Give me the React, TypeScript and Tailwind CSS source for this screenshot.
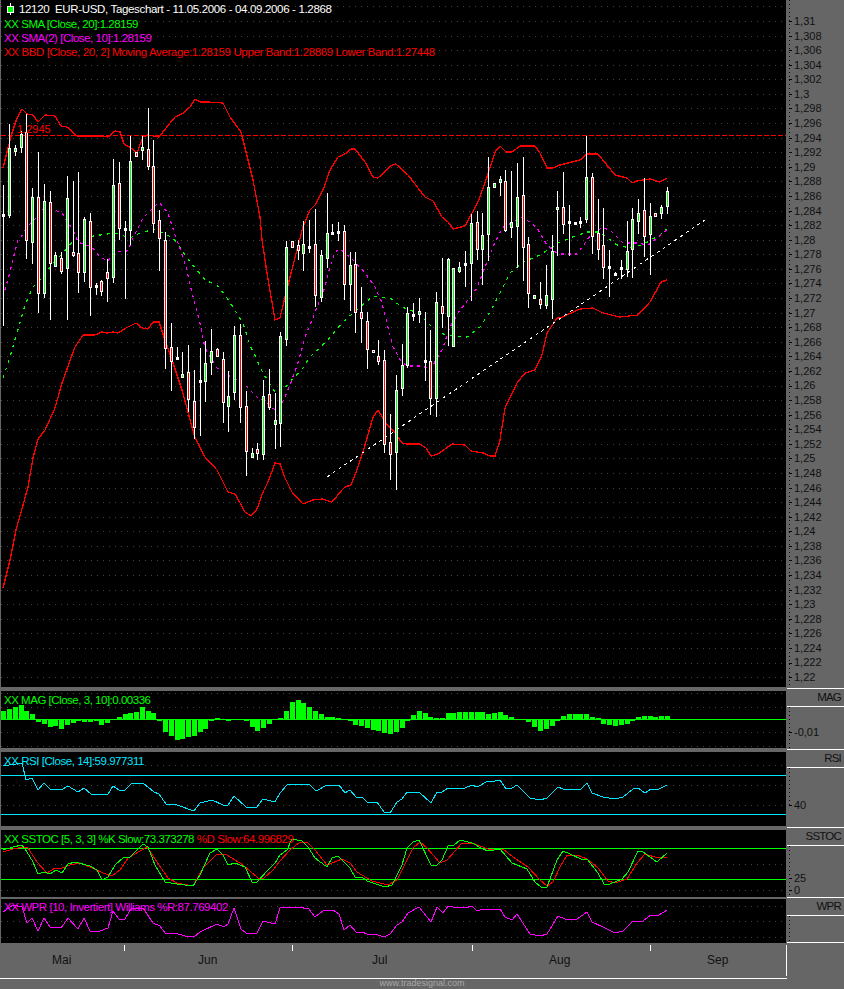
import React from 'react';

type Kind = 'g' | 'r' | 'w';
type Candle = [number, number, number, number, Kind];

// wick top, wick bottom, body top, body bottom, body colour (page pixels)
const candles: Candle[] = [
  [185, 326, 214, 216, 'w'], [124, 218, 148, 215, 'g'], [145, 156, 148, 151, 'g'], [131, 153, 134, 147, 'g'],
  [114, 259, 132, 240, 'r'], [188, 264, 197, 242, 'g'], [152, 313, 197, 293, 'r'], [184, 298, 201, 293, 'g'],
  [191, 320, 202, 263, 'r'], [252, 267, 255, 266, 'g'], [252, 274, 258, 271, 'r'], [176, 320, 198, 268, 'g'],
  [181, 257, 252, 255, 'r'], [172, 293, 253, 272, 'r'], [217, 282, 219, 272, 'g'], [213, 316, 221, 287, 'r'],
  [283, 295, 285, 287, 'w'], [280, 296, 281, 291, 'r'], [259, 302, 272, 278, 'r'], [159, 283, 185, 277, 'g'],
  [162, 240, 183, 228, 'r'], [221, 299, 228, 230, 'w'], [136, 245, 161, 230, 'g'], [152, 156, 152, 156, 'r'],
  [136, 160, 147, 150, 'g'], [108, 170, 149, 166, 'r'], [140, 233, 166, 223, 'r'], [210, 271, 220, 238, 'r'],
  [232, 369, 240, 348, 'r'], [323, 391, 347, 361, 'r'], [347, 358, 357, 358, 'w'], [352, 378, 374, 377, 'g'],
  [345, 412, 372, 399, 'r'], [370, 439, 401, 427, 'r'], [348, 436, 380, 382, 'w'], [341, 402, 363, 381, 'g'],
  [329, 375, 351, 362, 'g'], [348, 357, 349, 356, 'r'], [352, 423, 359, 402, 'r'], [371, 432, 396, 406, 'g'],
  [326, 400, 335, 392, 'g'], [324, 423, 335, 407, 'r'], [391, 476, 406, 451, 'r'], [448, 457, 453, 457, 'g'],
  [443, 460, 449, 453, 'r'], [380, 460, 396, 454, 'g'], [369, 410, 394, 407, 'r'], [393, 449, 420, 424, 'g'],
  [332, 447, 336, 423, 'g'], [241, 346, 247, 339, 'g'], [241, 248, 241, 247, 'r'], [240, 260, 245, 250, 'r'],
  [221, 271, 244, 253, 'g'], [220, 253, 246, 248, 'w'], [209, 307, 244, 295, 'r'], [250, 302, 255, 297, 'g'],
  [193, 268, 233, 258, 'g'], [224, 234, 232, 234, 'w'], [222, 241, 231, 233, 'w'], [225, 300, 231, 284, 'r'],
  [252, 311, 265, 284, 'g'], [252, 333, 264, 312, 'r'], [287, 343, 312, 318, 'r'], [312, 369, 321, 349, 'r'],
  [350, 352, 350, 352, 'r'], [340, 365, 356, 361, 'r'], [350, 453, 360, 444, 'r'], [414, 480, 442, 454, 'r'],
  [375, 490, 390, 452, 'g'], [344, 396, 365, 388, 'g'], [307, 368, 313, 365, 'g'], [303, 321, 314, 316, 'w'],
  [298, 323, 311, 314, 'g'], [312, 381, 360, 362, 'w'], [330, 415, 361, 398, 'r'], [292, 417, 302, 398, 'g'],
  [258, 328, 306, 313, 'r'], [258, 346, 259, 316, 'g'], [268, 346, 268, 346, 'g'], [262, 273, 267, 271, 'g'],
  [251, 287, 263, 265, 'w'], [214, 301, 223, 263, 'g'], [211, 260, 222, 249, 'r'], [213, 285, 235, 249, 'g'],
  [157, 261, 187, 234, 'g'], [183, 187, 183, 187, 'g'], [176, 196, 179, 182, 'g'], [170, 232, 181, 230, 'r'],
  [171, 238, 222, 227, 'g'], [163, 268, 197, 226, 'g'], [157, 281, 195, 247, 'r'], [237, 308, 244, 293, 'r'],
  [295, 298, 295, 298, 'g'], [282, 309, 299, 304, 'r'], [265, 309, 295, 305, 'g'], [235, 319, 251, 299, 'g'],
  [191, 256, 207, 209, 'g'], [172, 234, 207, 224, 'r'], [205, 256, 221, 223, 'w'], [222, 223, 222, 223, 'w'],
  [217, 228, 221, 222, 'w'], [136, 223, 177, 219, 'g'], [173, 254, 177, 236, 'r'], [199, 260, 233, 249, 'r'],
  [208, 279, 245, 267, 'r'], [250, 297, 266, 268, 'w'], [272, 276, 273, 275, 'w'], [260, 279, 267, 269, 'w'],
  [221, 277, 251, 269, 'g'], [208, 278, 219, 249, 'g'], [199, 234, 213, 221, 'g'], [178, 257, 210, 236, 'r'],
  [203, 275, 216, 234, 'g'], [213, 216, 213, 216, 'r'], [205, 219, 207, 213, 'g'], [187, 214, 191, 206, 'g'],
];

const magBars = [
  9, 11, 13, 15, 9, 6, -2, -4, -7, -6, -9, -5, -3, -1, -2, -2, -1, -5, -3, 1, 3, 6, 7, 8, 13, 9, 7, -1, -12, -16,
  -20, -19, -17, -16, -12, -9, -1, 2, 0, -1, 0, 0, -1, -7, -11, -8, -4, 0, 2, 9, 18, 20, 17, 13, 9, 6, 3, 3, 2, 0,
  -1, -5, -6, -8, -10, -11, -13, -14, -12, -8, -1, 5, 9, 7, 3, 2, 2, 7, 7, 8, 8, 8, 8, 8, 6, 7, 8, 5, 3, 1, 0, -2,
  -7, -11, -9, -6, -1, 4, 6, 6, 6, 6, 3, 2, -4, -5, -6, -5, -4, -1, 3, 4, 4, 3, 4, 4,
];

const upperBand =
  '3,168 7,152 12,133 17,118 22,109 27,114 33,115 38,122 45,115 55,116 61,126 67,127 77,136 100,136 108,137 115,131 120,132 124,144 131,148 137,153 143,137 148,135 159,137 170,123 175,117 182,114 190,107 195,99 200,102 208,102 223,103 230,117 241,132 248,160 253,180 260,217 262,240 267,273 275,320 280,318 285,297 290,277 297,250 303,227 310,210 315,205 323,190 330,170 338,157 345,154 351,149 355,149 365,162 373,177 378,178 392,165 396,164 408,175 425,197 433,201 442,217 448,222 453,229 465,226 472,213 478,202 487,177 495,152 500,146 506,152 512,152 520,146 535,146 540,153 547,168 553,168 560,165 580,160 587,154 598,154 615,175 627,178 632,183 637,181 650,179 660,182 667,178';
const lowerBand =
  '3,588 10,560 16,530 23,505 28,487 33,458 38,439 45,430 55,408 62,383 72,355 75,347 83,335 95,335 102,332 107,333 113,332 118,333 126,328 136,323 142,328 148,329 153,322 159,322 165,340 172,360 182,390 195,438 205,457 217,470 228,492 235,494 245,512 251,516 257,509 263,492 268,482 275,463 280,464 285,478 292,492 303,504 313,500 322,499 332,502 342,490 345,487 351,485 357,470 365,445 373,417 378,410 386,423 395,433 402,443 407,444 420,444 426,448 431,456 438,454 452,444 465,445 471,451 483,453 490,456 495,456 500,440 505,408 517,383 525,373 535,370 542,355 547,333 557,318 560,318 580,309 593,308 603,313 620,317 638,315 650,302 661,282 667,280';
const smaMagenta =
  '3,297 10,272 18,240 21,237 27,227 37,217 43,209 52,209 62,213 73,230 78,242 92,247 100,257 108,261 115,252 127,251 131,244 133,238 143,218 159,202 168,213 175,235 178,243 185,263 192,293 200,323 205,348 217,368 233,378 245,385 257,397 267,403 275,410 280,408 290,385 298,363 305,337 312,320 317,307 325,287 330,267 335,252 340,249 353,260 365,273 375,287 382,303 387,323 393,347 402,363 410,366 423,366 430,370 442,350 450,327 458,313 477,288 485,267 493,247 502,228 513,222 523,217 537,228 547,245 558,254 577,254 585,243 592,233 602,228 610,230 623,243 637,243 648,245 657,238 667,230';
const smaGreen =
  '3,378 10,357 17,333 25,305 33,287 43,277 53,263 63,253 72,242 80,238 100,235 115,233 130,238 140,233 155,229 173,238 177,243 190,262 205,280 217,285 227,298 243,323 250,345 263,373 275,392 280,393 290,382 303,368 310,357 328,340 343,322 360,307 373,296 390,298 402,307 418,313 433,328 445,335 467,337 480,327 490,312 500,293 510,273 523,262 540,255 558,243 570,238 587,232 600,232 617,245 630,248 642,245 660,235 667,229';
const rsiLine =
  '3,766 22,763 26,780 32,778 38,790 44,783 50,789 61,790 68,786 78,792 84,788 91,794 108,794 113,786 119,790 125,790 131,784 143,783 154,792 159,794 166,804 177,805 194,811 200,803 212,800 223,805 228,805 234,796 246,807 257,807 263,799 275,802 280,793 287,785 309,784 316,791 327,785 339,785 345,793 350,790 356,797 362,797 367,802 377,802 384,812 390,813 397,802 402,799 407,792 419,792 431,803 437,792 442,792 448,788 465,788 472,785 477,787 488,781 495,781 500,780 506,789 512,788 517,785 530,798 540,800 547,798 558,787 563,789 581,789 587,783 592,793 603,797 615,799 623,797 633,789 638,788 645,793 651,789 659,789 667,785';
const stochK =
  '3,850 13,847 22,845 27,852 33,862 38,874 44,872 50,874 56,870 62,873 68,864 75,862 90,866 97,870 102,880 108,877 115,865 123,858 130,857 143,844 148,847 155,865 165,882 177,884 193,886 200,875 210,853 217,849 223,855 228,865 235,863 245,867 252,882 257,882 268,870 275,863 280,855 287,850 292,839 302,841 308,847 315,858 327,867 332,858 338,856 350,868 355,877 362,877 367,881 385,887 392,885 402,865 407,848 413,842 419,840 431,865 437,865 442,860 448,846 454,845 460,840 472,843 483,849 488,851 500,849 512,863 527,869 535,882 541,887 547,887 557,860 563,851 570,854 581,859 587,859 598,873 604,884 610,884 622,879 628,872 638,851 643,852 657,862 667,853';
const stochD =
  '3,852 13,849 23,847 28,848 37,862 47,873 55,868 62,868 70,865 80,863 92,868 103,873 112,876 120,870 128,858 147,847 157,862 168,878 177,883 193,886 203,868 217,854 227,855 243,865 258,878 263,879 273,870 280,861 290,850 300,842 308,843 315,850 327,865 342,859 350,863 357,872 372,881 388,885 397,880 407,860 413,848 420,842 427,848 440,863 447,860 462,843 472,843 488,849 503,849 513,857 528,867 540,880 547,886 553,882 560,867 567,855 577,855 587,859 598,868 608,881 615,883 627,879 637,863 645,854 658,858 667,857';
const wprLine =
  '3,912 13,905 22,907 27,923 32,918 38,931 44,918 50,927 61,928 68,918 78,929 84,918 90,931 100,931 108,928 113,911 119,919 125,919 131,909 143,908 153,923 160,926 166,934 175,933 185,936 194,937 200,932 217,924 224,927 228,924 234,908 241,929 246,933 257,933 263,921 275,924 280,908 285,907 298,907 309,909 315,917 323,911 333,910 339,914 344,930 350,925 356,932 362,932 367,934 378,935 384,937 390,934 397,925 402,922 408,913 419,907 431,922 437,907 443,913 448,906 453,907 465,908 472,906 477,911 483,909 500,909 505,917 512,920 517,914 530,934 540,936 547,934 558,916 565,919 577,919 587,912 592,922 603,927 615,933 623,931 633,921 643,921 651,915 659,915 667,910';

const candleX = (i: number) => Math.round(3.4 + 5.77 * i);
const axisY = (n: number) => 21 + n * 14.58;
const axisLabels = Array.from({ length: 46 }, (_, n) =>
  String(parseFloat((1.31 - n * 0.002).toFixed(3))).replace('.', ','),
);
const mainGrid = Array.from({ length: 47 }, (_, n) => Math.round(axisY(n - 1)));

const fill: Record<Kind, string> = { g: '#00ff00', r: '#ff0000', w: '#ffffff' };

function Grid({ ys }: { ys: number[] }) {
  return (
    <>
      {ys.map((y) => (
        <line key={y} x1={1} x2={786} y1={y + 0.5} y2={y + 0.5} stroke="#444" strokeDasharray="1 5" />
      ))}
    </>
  );
}

function Rule({ y, color }: { y: number; color: string }) {
  return <line x1={1} x2={786} y1={y + 0.5} y2={y + 0.5} stroke={color} />;
}

function Trace({ points, color, dash, width = 1 }: { points: string; color: string; dash?: string; width?: number }) {
  return <polyline points={points} fill="none" stroke={color} strokeWidth={width} strokeDasharray={dash} />;
}

function Plot({ top, height, children }: { top: number; height: number; children: React.ReactNode }) {
  return (
    <svg
      className="absolute inset-0 w-full h-full"
      viewBox={`1 ${top} 785 ${height}`}
      shapeRendering="crispEdges"
    >
      {children}
    </svg>
  );
}

function Candles() {
  return (
    <>
      {candles.map(([hi, lo, top, bottom, kind], i) => {
        const x = candleX(i);
        const h = Math.max(bottom - top, 2);
        return (
          <g key={i}>
            <rect x={x} y={hi} width={1} height={lo - hi} fill="#fff" />
            <rect x={x - 1} y={top} width={3} height={h + 1} fill="#fff" />
            <rect x={x} y={top + 1} width={1} height={h - 1} fill={fill[kind]} />
          </g>
        );
      })}
    </>
  );
}

function MagBars() {
  return (
    <>
      {magBars.map((v, i) => (
        <rect
          key={i}
          x={candleX(i) - 2}
          y={v >= 0 ? 720 - v : 720}
          width={5}
          height={Math.abs(v)}
          fill="#00ff00"
        />
      ))}
    </>
  );
}

function Legend({ className, children }: { className: string; children: React.ReactNode }) {
  return (
    <div className={`relative pl-[3px] text-[11.5px] leading-[14px] whitespace-nowrap ${className}`}>{children}</div>
  );
}

function AxisRail({ height, ticks }: { height: number; ticks: number[] }) {
  return (
    <svg className="absolute left-0 top-0" width={8} height={height} shapeRendering="crispEdges">
      <line x1={2.5} x2={2.5} y1={0} y2={height} stroke="#000" strokeDasharray="1 3" />
      {ticks.map((y) => (
        <line key={y} x1={2} x2={5} y1={y + 0.5} y2={y + 0.5} stroke="#000" />
      ))}
    </svg>
  );
}

function PaneTitle({ children }: { children: string }) {
  return (
    <div className="h-[19px] border-y border-white pr-[3px] text-right text-[11.5px] leading-[17px] tracking-[-0.8px] text-[#111]">
      {children}
    </div>
  );
}

export default function App() {
  return (
    <div className="flex h-[989px] w-[844px] flex-col overflow-hidden bg-[#666666] font-['Liberation_Sans',sans-serif]">
      <div className="flex h-[977px]">
        <div className="w-[787px] shrink-0">
          <div className="relative ml-px h-[687px] w-[785px] bg-black">
            <Plot top={0} height={687}>
              <Grid ys={mainGrid} />
              <line x1={1} x2={786} y1={135.5} y2={135.5} stroke="#f00" strokeDasharray="5 2" />
              <Trace points={upperBand} color="#f00" width={1.3} />
              <Trace points={lowerBand} color="#f00" width={1.3} />
              <Trace points={smaGreen} color="#00ff00" dash="3 5" width={1.2} />
              <Trace points={smaMagenta} color="#ff00ff" dash="3 4" width={1.2} />
              <line x1={327} y1={477} x2={705} y2={220} stroke="#fff" strokeDasharray="3 4" />
              <Candles />
            </Plot>
            <div className="relative pt-[2px]">
              <Legend className="mb-[1px] flex items-center tracking-[-0.34px] text-white">
                <svg className="mr-[4px] ml-[3px]" width={8} height={12} viewBox="0 0 8 12" shapeRendering="crispEdges">
                  <rect x={3} y={0} width={1} height={12} fill="#fff" />
                  <rect x={0.5} y={3.5} width={6} height={6} fill="#00ff00" stroke="#fff" />
                </svg>
                <span>12120&nbsp; EUR-USD, Tageschart - 11.05.2006 - 04.09.2006 - 1.2868</span>
              </Legend>
              <Legend className="tracking-[-0.45px] text-[#00ff00]">XX SMA [Close, 20]:1.28159</Legend>
              <Legend className="tracking-[-0.45px] text-[#ff00ff]">XX SMA(2) [Close, 10]:1.28159</Legend>
              <Legend className="tracking-[-0.38px] text-[#ff0000]">
                XX BBD [Close, 20, 2] Moving Average:1.28159 Upper Band:1.28869 Lower Band:1.27448
              </Legend>
            </div>
            <span className="absolute left-[16px] top-[122px] text-[11px] leading-[14px] text-[#ff0000]">1.2945</span>
          </div>

          <div className="relative mt-[4px] ml-px h-[57px] w-[785px] bg-black">
            <Plot top={691} height={57}>
              <Grid ys={[693, 707, 732, 746]} />
              <MagBars />
              <Rule y={719} color="#00ff00" />
            </Plot>
            <Legend className="pt-[2px] tracking-[-0.48px] text-[#00ff00]">XX MAG [Close, 3, 10]:0.00336</Legend>
          </div>

          <div className="relative mt-[4px] ml-px h-[74px] w-[785px] bg-black">
            <Plot top={752} height={74}>
              <Grid ys={[765, 785, 805]} />
              <Rule y={775} color="#00e8ff" />
              <Rule y={814} color="#00e8ff" />
              <Trace points={rsiLine} color="#00e8ff" />
            </Plot>
            <Legend className="pt-[2px] tracking-[-0.45px] text-[#00e8ff]">XX RSI [Close, 14]:59.977311</Legend>
          </div>

          <div className="relative mt-[4px] ml-px h-[67px] w-[785px] bg-black">
            <Plot top={830} height={67}>
              <Grid ys={[864, 890]} />
              <Rule y={848} color="#00ff00" />
              <Rule y={879} color="#00ff00" />
              <Trace points={stochD} color="#f00" />
              <Trace points={stochK} color="#00ff00" />
            </Plot>
            <Legend className="pt-[2px] tracking-[-0.45px] text-[#00ff00]">
              XX SSTOC [5, 3, 3] %K Slow:73.373278 <span className="text-[#ff0000]">%D Slow:64.996829</span>
            </Legend>
          </div>

          <div className="relative mt-[2px] ml-px h-[44px] w-[785px] bg-black">
            <Plot top={899} height={44}>
              <Grid ys={[906, 921, 937]} />
              <Trace points={wprLine} color="#ff00ff" />
            </Plot>
            <Legend className="pt-[1px] tracking-[-0.45px] text-[#ff00ff]">
              XX WPR [10, Invertiert] Williams %R:87.769402
            </Legend>
          </div>

          <div className="h-[34px] border-b border-white">
            <div className="relative mt-[2px] h-[31px] border-r border-white text-[12px] leading-[14px] text-[#111]">
              <span className="absolute left-[124px] top-0 h-[6px] w-px bg-white" />
              <span className="absolute left-[292px] top-0 h-[6px] w-px bg-white" />
              <span className="absolute left-[472px] top-0 h-[6px] w-px bg-white" />
              <span className="absolute left-[650px] top-0 h-[6px] w-px bg-white" />
              <div className="grid grid-cols-[146px_174px_177px_158px_auto] pt-[8px] pl-[52px]">
                <span>Mai</span>
                <span>Jun</span>
                <span>Jul</span>
                <span>Aug</span>
                <span>Sep</span>
              </div>
            </div>
          </div>
        </div>

        <div className="flex-1 text-[11px] leading-[14px] text-[#111]">
          <div className="relative h-[688px] pt-[14px] pl-[7px]">
            <AxisRail height={688} ticks={axisLabels.map((_, n) => Math.round(axisY(n)))} />
            {axisLabels.map((label) => (
              <div key={label} className="h-[14.58px]">
                {label}
              </div>
            ))}
          </div>
          <PaneTitle>MAG</PaneTitle>
          <div className="relative h-[42px] pt-[18px] pl-[7px]">
            <AxisRail height={42} ticks={[25]} />
            -0,01
          </div>
          <PaneTitle>RSI</PaneTitle>
          <div className="relative h-[59px] pt-[30px] pl-[7px]">
            <AxisRail height={40} ticks={[37]} />
            40
          </div>
          <PaneTitle>SSTOC</PaneTitle>
          <div className="relative h-[51px] pt-[26px] pl-[7px] leading-[12px]">
            <AxisRail height={50} ticks={[32, 44]} />
            <div>25</div>
            <div>0</div>
          </div>
          <PaneTitle>WPR</PaneTitle>
          <div className="relative h-[27px] border-b border-white">
            <AxisRail height={26} ticks={[]} />
          </div>
        </div>
      </div>
      <div className="text-center text-[9px] leading-[12px] text-[#a8a8a8]">www.tradesignal.com</div>
    </div>
  );
}
